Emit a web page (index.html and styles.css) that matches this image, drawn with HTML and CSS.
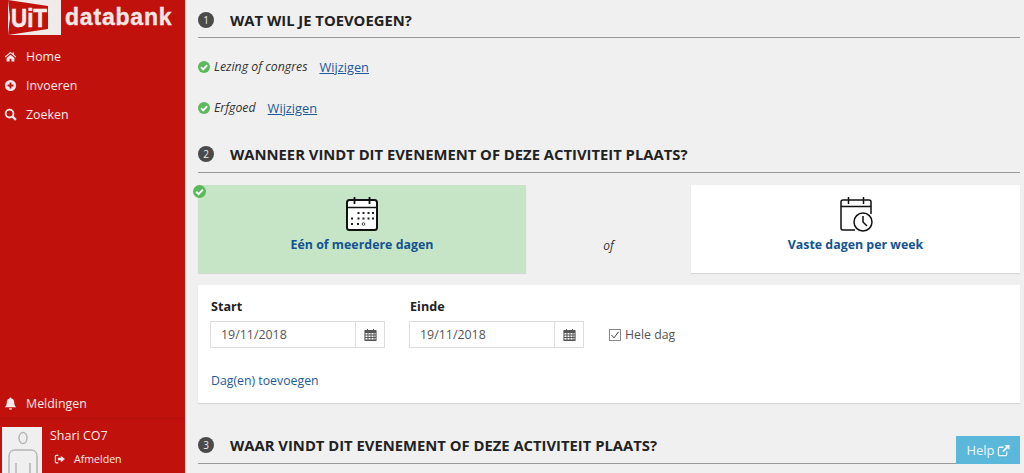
FILE: index.html
```html
<!DOCTYPE html>
<html lang="en">
<head>
  <meta charset="UTF-8" />
  <title>UiT databank</title>
  <link rel="stylesheet" href="styles.css">
</head>
<body>
  <div class="page">
    <aside class="sidebar">
      <div class="brand">
        <svg class="brand-mark" viewBox="0 0 53 35">
          <path fill="#f0ebe8" d="M0 0H53V35H0z"/>
          <path fill="#c0110d" d="M0 0 40 6V29L0 35 2 17.500z"/>
          <text x="3" y="27" textLength="36" lengthAdjust="spacingAndGlyphs">UiT</text>
        </svg>
        <span class="brand-name">databank</span>
      </div>
      <nav class="menu">
        <a class="menu-item">
          <svg class="menu-icon" viewBox="0 0 14 14"><path fill="#f6eaea" d="M7 2 .8 7.200l.8 1L7 3.600l5.400 4.600.8-1-2.400-2V2.600H9.200v1.400zM2.800 8.500v4H6V9.500h2v3h3.200v-4L7 5z"/></svg>
          Home
        </a>
        <a class="menu-item">
          <svg class="menu-icon" viewBox="0 0 14 14"><circle cx="7" cy="7" r="6" fill="#f6eaea"/><path d="M7 3.800v6.400M3.800 7h6.400" stroke="#c0110d" stroke-width="2"/></svg>
          Invoeren
        </a>
        <a class="menu-item">
          <svg class="menu-icon" viewBox="0 0 14 14"><circle cx="6" cy="6" r="4.200" fill="none" stroke="#f6eaea" stroke-width="2"/><path d="M9 9l3.800 3.800" stroke="#f6eaea" stroke-width="2.400"/></svg>
          Zoeken
        </a>
      </nav>
      <div class="sidebar-bottom">
        <a class="menu-item notify">
          <svg class="menu-icon" viewBox="0 0 14 14"><path fill="#f6eaea" d="M7 .5a1 1 0 0 1 1 1c2 .4 3 2 3 4 0 3.500 1 4.500 2 5.500H1c1-1 2-2 2-5.500 0-2 1-3.600 3-4a1 1 0 0 1 1-1zM5.300 12h3.400a1.700 1.700 0 0 1-3.400 0z"/></svg>
          Meldingen
        </a>
        <div class="user">
          <div class="avatar">
            <svg viewBox="0 0 40 46" width="40" height="46"><ellipse cx="21" cy="11" rx="4" ry="5.500" fill="none" stroke="#b5b5b5" stroke-width="1.500"/><path d="M7 46V29c0-4 3-6 6-6h16c3 0 6 2 6 6v17M14 36v10M28 36v10" fill="none" stroke="#b5b5b5" stroke-width="1.500"/></svg>
          </div>
          <div class="user-info">
            <div class="user-name">Shari CO7</div>
            <a class="logout">
              <svg class="logout-icon" viewBox="0 0 14 12"><path fill="none" stroke="#f6eaea" stroke-width="1.500" d="M5 1.500H2.500a1 1 0 0 0-1 1v7a1 1 0 0 0 1 1H5"/><path fill="#f6eaea" d="M4.500 4.500H8V2l5 4-5 4V7.500H4.500z"/></svg>
              Afmelden
            </a>
          </div>
        </div>
      </div>
    </aside>

    <main class="content">
      <h2 class="step"><span class="step-nr">1</span>Wat wil je toevoegen?</h2>
      <p class="choice first">
        <svg class="check" viewBox="0 0 12 12"><circle cx="6" cy="6" r="6" fill="#5cb85c"/><path d="M3 6.200l2.200 2.200L9.200 4.200" fill="none" stroke="#fff" stroke-width="1.800"/></svg>
        <em>Lezing of congres</em><a class="change">Wijzigen</a>
      </p>
      <p class="choice">
        <svg class="check" viewBox="0 0 12 12"><circle cx="6" cy="6" r="6" fill="#5cb85c"/><path d="M3 6.200l2.200 2.200L9.200 4.200" fill="none" stroke="#fff" stroke-width="1.800"/></svg>
        <em>Erfgoed</em><a class="change">Wijzigen</a>
      </p>

      <h2 class="step second"><span class="step-nr">2</span>Wanneer vindt dit evenement of deze activiteit plaats?</h2>
      <div class="options">
        <div class="option selected">
          <svg class="option-check" viewBox="0 0 12 12"><circle cx="6" cy="6" r="6" fill="#5cb85c"/><path d="M3 6.200l2.200 2.200L9.200 4.200" fill="none" stroke="#fff" stroke-width="1.800"/></svg>
          <svg class="option-icon" viewBox="0 0 34 36">
            <rect x="2" y="4" width="30" height="30" rx="2.500" fill="#fff" stroke="#111" stroke-width="2"/>
            <path d="M2 11.500h30" stroke="#111" stroke-width="1.500"/>
            <path d="M9.500 1v7M24.500 1v7" stroke="#111" stroke-width="1.800"/>
            <path d="M12.500 17h2M17.500 17h2M22.500 17h2M27 17h2M6 22.500h2M12.500 22.500h2M17.500 22.500h2M22.500 22.500h2M27 22.500h2M6 28h2M12 28h2" stroke="#222" stroke-width="2"/>
            <circle cx="18.500" cy="28" r="1.300" fill="none" stroke="#222" stroke-width=".8"/>
          </svg>
          <span class="option-label">Eén of meerdere dagen</span>
        </div>
        <span class="or">of</span>
        <div class="option other">
          <svg class="option-icon" viewBox="0 0 34 36">
            <path d="M16 34H4a2 2 0 0 1-2-2V6a2 2 0 0 1 2-2h26a2 2 0 0 1 2 2v12M2 10.500h30" fill="none" stroke="#111" stroke-width="1.500"/>
            <path d="M9.500 1v7M24.500 1v7" stroke="#111" stroke-width="1.500"/>
            <circle cx="24" cy="26" r="9" fill="#fff" stroke="#111" stroke-width="1.500"/>
            <path d="M24 20v6l4 4" fill="none" stroke="#111" stroke-width="1.500"/>
          </svg>
          <span class="option-label">Vaste dagen per week</span>
        </div>
      </div>

      <div class="card">
        <div class="date-row">
          <div class="field">
            <label class="field-label">Start</label>
            <div class="input-group">
              <span class="date-input">19/11/2018</span>
              <span class="date-btn"><svg class="cal" viewBox="0 0 13 13"><path fill="#555" d="M1 2h2V1h1v1h5V1h1v1h2a.6.6 0 0 1 .6.6v9.800a.6.6 0 0 1-.6.6H1a.6.6 0 0 1-.6-.6V2.600A.6.6 0 0 1 1 2zM1.500 5v1.500h2V5zm3 0v1.500h2V5zm3 0v1.500h2V5zm3 0v1.500h1V5zm-9 2.500V9h2V7.500zm3 0V9h2V7.500zm3 0V9h2V7.500zm3 0V9h1V7.500zm-9 2.500v1.500h2V10zm3 0v1.500h2V10zm3 0v1.500h2V10zm3 0v1.500h1V10z"/></svg></span>
            </div>
          </div>
          <div class="field">
            <label class="field-label">Einde</label>
            <div class="input-group">
              <span class="date-input">19/11/2018</span>
              <span class="date-btn"><svg class="cal" viewBox="0 0 13 13"><path fill="#555" d="M1 2h2V1h1v1h5V1h1v1h2a.6.6 0 0 1 .6.6v9.800a.6.6 0 0 1-.6.6H1a.6.6 0 0 1-.6-.6V2.600A.6.6 0 0 1 1 2zM1.500 5v1.500h2V5zm3 0v1.500h2V5zm3 0v1.500h2V5zm3 0v1.500h1V5zm-9 2.500V9h2V7.500zm3 0V9h2V7.500zm3 0V9h2V7.500zm3 0V9h1V7.500zm-9 2.500v1.500h2V10zm3 0v1.500h2V10zm3 0v1.500h2V10zm3 0v1.500h1V10z"/></svg></span>
            </div>
          </div>
          <div class="all-day">
            <svg class="box" viewBox="0 0 12 12"><rect x=".5" y=".5" width="11" height="11" fill="#fff" stroke="#888"/><path d="M2.500 6l2.500 2.800L9.500 2.800" fill="none" stroke="#444"/></svg>
            Hele dag
          </div>
        </div>
        <a class="add-days">Dag(en) toevoegen</a>
      </div>

      <h2 class="step third"><span class="step-nr">3</span>Waar vindt dit evenement of deze activiteit plaats?</h2>
    </main>

    <a class="help">Help
      <svg class="help-icon" viewBox="0 0 14 14"><path fill="none" stroke="#eaf6fb" stroke-width="1.400" d="M10.500 8v3a1.500 1.500 0 0 1-1.500 1.500H3A1.500 1.500 0 0 1 1.500 11V5A1.500 1.500 0 0 1 3 3.500h4"/><path fill="#eaf6fb" d="M8 1h5.500v5.500l-2-2L7 9 5.500 7.500 10 3z"/></svg>
    </a>
  </div>
</body>
</html>
```

FILE: styles.css
```css
* {
  box-sizing: border-box;
}
html, body {
  height: 100%;
}
body {
  margin: 0;
  font-family: "Open Sans", sans-serif;
  font-size: 13px;
  color: #333;
  background: #f0f0f0;
  overflow: hidden;
}
.page {
  display: flex;
  height: 473px;
}

/* sidebar */
.sidebar {
  width: 185px;
  flex: none;
  display: flex;
  flex-direction: column;
  background: #c0110d;
  color: #f6eaea;
}
.brand {
  display: flex;
  align-items: flex-start;
  height: 35px;
  padding-left: 8px;
}
.brand-mark {
  width: 53px;
  height: 35px;
  flex: none;
}
.brand-mark text {
  font-family: "Liberation Sans", sans-serif;
  font-weight: bold;
  font-size: 26px;
  fill: #f4ece8;
  stroke: #f4ece8;
  stroke-width: .6px;
}
.brand-name {
  margin-left: 4px;
  font-family: "Liberation Sans", sans-serif;
  font-weight: bold;
  font-size: 23px;
  line-height: 35px;
  letter-spacing: .8px;
  color: #f4e6e2;
  -webkit-text-stroke: .4px #f4e6e2;
}
.menu {
  padding-top: 7px;
}
.menu-item {
  display: flex;
  align-items: center;
  height: 29px;
  padding-left: 4px;
  font-size: 12.400px;
  color: #f6eaea;
}
.menu-icon {
  width: 13px;
  height: 13px;
  margin-right: 9px;
}
.sidebar-bottom {
  margin-top: auto;
}
.notify {
  height: 30px;
  border-bottom: 1px solid #b10f0b;
}
.user {
  display: flex;
  height: 54px;
  padding: 8px 0 0 2px;
}
.avatar {
  width: 40px;
  height: 46px;
  background: #efefef;
  overflow: hidden;
}
.avatar svg {
  display: block;
}
.user-info {
  margin-left: 8px;
}
.user-name {
  font-size: 12.500px;
  line-height: 18px;
}
.logout {
  display: flex;
  align-items: center;
  margin: 7px 0 0 4px;
  font-size: 10.600px;
  line-height: 14px;
}
.logout-icon {
  width: 12px;
  height: 10px;
  margin-right: 8px;
}

/* main column */
.content {
  flex: 1;
  min-width: 0;
  padding: 0 4px 0 13px;
}
.step {
  display: flex;
  align-items: center;
  height: 38px;
  margin: 0;
  padding-top: 2px;
  border-bottom: 1px solid #999;
  font-size: 14.800px;
  font-weight: 700;
  color: #222;
  text-transform: uppercase;
}
.step.second {
  height: 39px;
  margin-top: 16px;
}
.step.third {
  height: 39px;
  margin-top: 22px;
}
.step-nr {
  flex: none;
  width: 16px;
  height: 16px;
  margin-right: 16px;
  border-radius: 50%;
  background: #4a4a4a;
  color: #eee;
  font-size: 10px;
  font-weight: 400;
  line-height: 16px;
  text-align: center;
}
.choice {
  display: flex;
  align-items: center;
  height: 20px;
  margin: 0;
  margin-top: 21px;
  font-size: 12.300px;
}
.choice.first {
  margin-top: 19px;
}
.check {
  width: 12px;
  height: 12px;
  margin-right: 4px;
}
.choice em {
  position: relative;
  top: -1px;
  color: #333;
}
.change {
  margin-left: 12px;
  font-size: 12.800px;
  color: #1d5a9a;
  text-decoration: underline;
}

/* option tiles */
.options {
  display: flex;
  margin-top: 12px;
}
.option {
  position: relative;
  display: flex;
  flex-direction: column;
  align-items: center;
  width: 328px;
  height: 88px;
  padding-top: 11px;
  background: #fff;
  box-shadow: 0 1px 1px rgba(0,0,0,0.1);
}
.option.selected {
  background: #c6e5c6;
}
.option.other {
  width: 329px;
}
.option-check {
  position: absolute;
  top: 0;
  left: -5px;
  width: 13px;
  height: 13px;
}
.option-icon {
  width: 34px;
  height: 36px;
}
.option-label {
  margin-top: 4px;
  font-size: 12.400px;
  font-weight: 700;
  color: #14538f;
}
.or {
  flex: 1;
  align-self: flex-end;
  padding-bottom: 19px;
  font-size: 12px;
  font-style: italic;
  text-align: center;
}

/* date card */
.card {
  margin-top: 12px;
  height: 118px;
  padding: 13px 12px;
  background: #fff;
  box-shadow: 0 1px 1px rgba(0,0,0,0.1);
}
.date-row {
  display: flex;
  align-items: flex-end;
}
.field {
  width: 175px;
  margin-right: 24px;
}
.field-label {
  display: block;
  margin-bottom: 5px;
  padding-left: 1px;
  font-size: 12.600px;
  font-weight: 700;
  line-height: 18px;
  color: #222;
}
.input-group {
  display: flex;
  height: 27px;
  border: 1px solid #ddd;
}
.date-input {
  flex: 1;
  padding-left: 10px;
  border-right: 1px solid #ddd;
  font-size: 12.400px;
  line-height: 25px;
  color: #555;
}
.date-btn {
  display: flex;
  align-items: center;
  justify-content: center;
  width: 28px;
}
.cal {
  width: 13px;
  height: 13px;
}
.all-day {
  display: flex;
  align-items: center;
  height: 27px;
  margin-left: 1px;
  font-size: 12.300px;
  color: #555;
}
.box {
  width: 12px;
  height: 12px;
  margin-right: 4px;
}
.add-days {
  display: block;
  margin: 24px 0 0 1px;
  font-size: 12.300px;
  color: #1d5a9a;
}

/* floating help button */
.help {
  position: absolute;
  left: 956px;
  top: 436px;
  display: flex;
  align-items: center;
  justify-content: center;
  width: 64px;
  height: 28px;
  background: #5bb8da;
  color: #eaf6fb;
  font-size: 13px;
}
.help-icon {
  width: 13px;
  height: 13px;
  margin-left: 2px;
}
```
